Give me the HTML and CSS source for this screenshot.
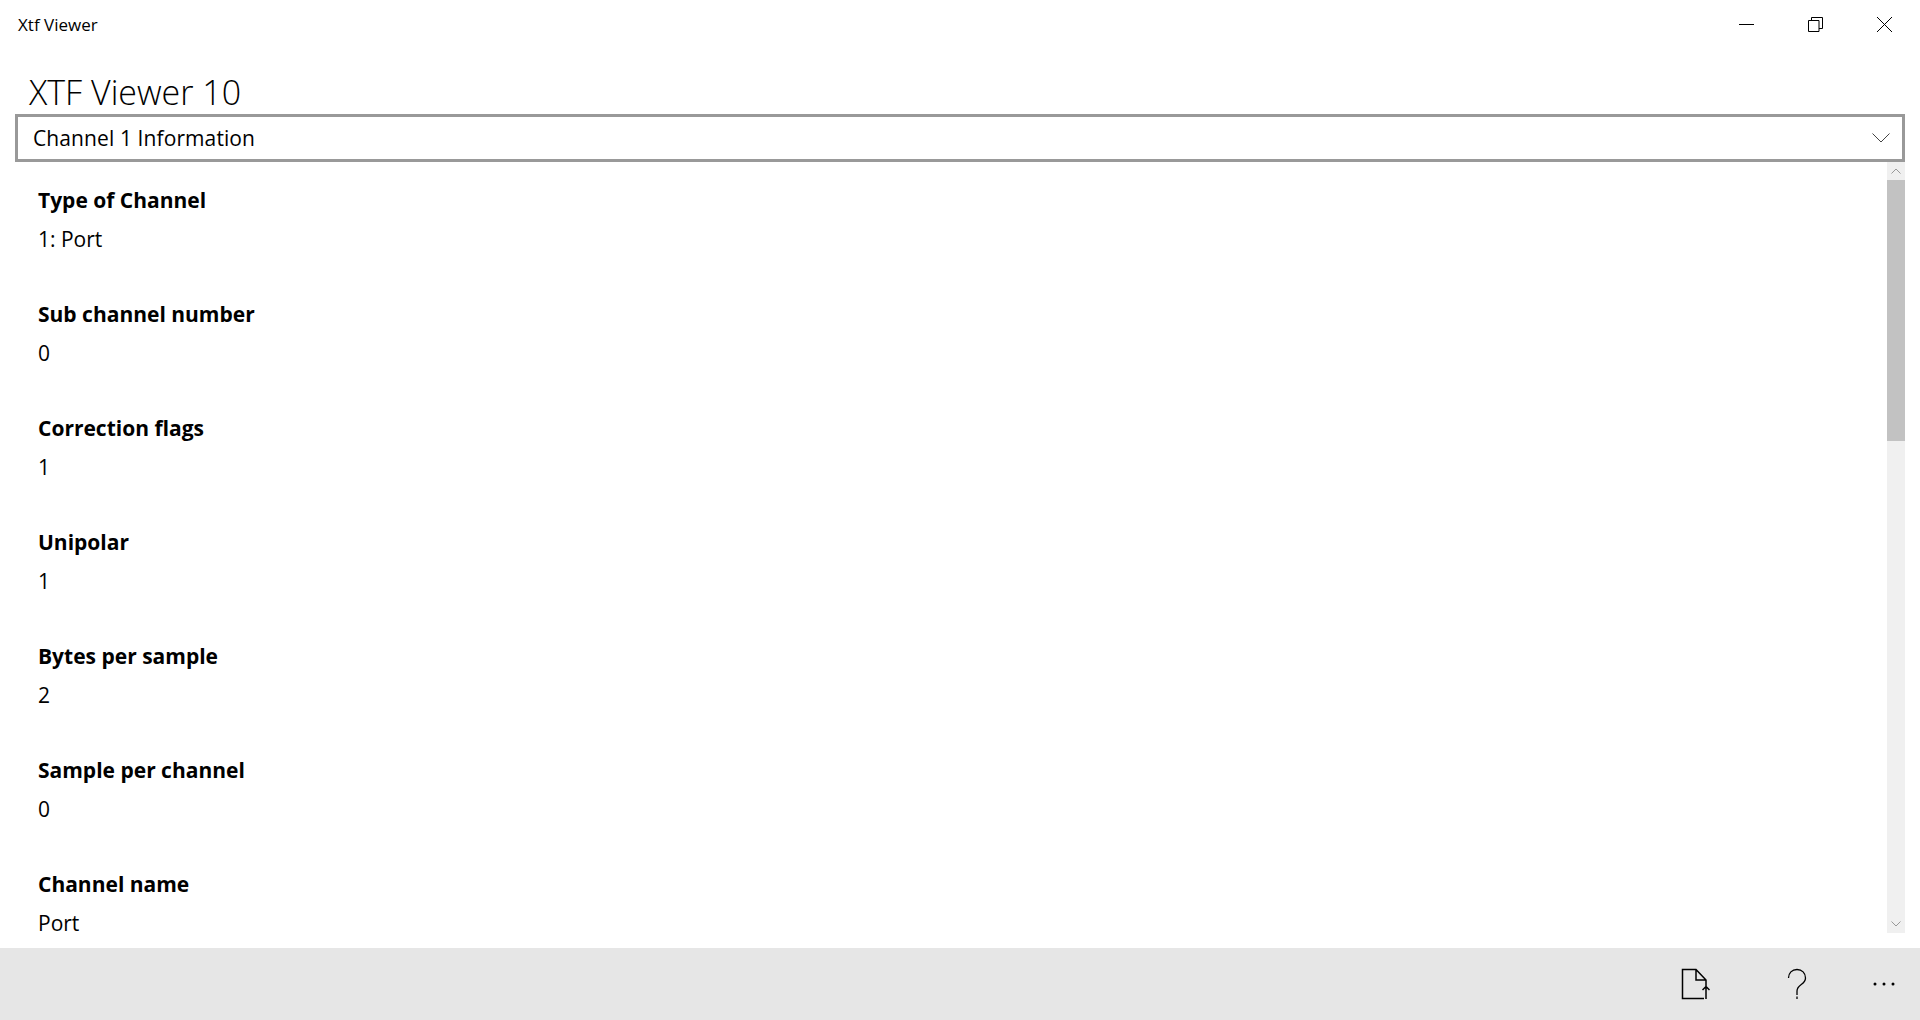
FILE: index.html
```html
<!DOCTYPE html>
<html lang="en">
<head>
  <meta charset="UTF-8" />
  <title>Xtf Viewer</title>
  <link rel="stylesheet" href="styles.css">
</head>
<body>
  <div class="app">
    <!-- Title bar -->
    <header class="titlebar">
      <span class="app-name">Xtf Viewer</span>
      <div class="win-buttons">
        <div class="win-btn"><svg width="15" height="15" viewBox="0 0 15 15"><path d="M0 7.500h15" /></svg></div>
        <div class="win-btn"><svg width="15" height="15" viewBox="0 0 15 15"><path d="M0.500 3.500h10.500v11h-10.500zM3.500 3.500v-3h11v11h-3.500" /></svg></div>
        <div class="win-btn"><svg width="15" height="15" viewBox="0 0 15 15"><path d="M0 0l15 15M15 0l-15 15" /></svg></div>
      </div>
    </header>

    <h1 class="page-title">XTF Viewer 10</h1>

    <div class="combo">
      <span>Channel 1 Information</span>
      <svg class="combo-arrow" width="18" height="10" viewBox="0 0 18 10"><path d="M0.500 0.500l8.500 8.500l8.500-8.500" /></svg>
    </div>

    <!-- Field list with scrollbar -->
    <div class="content">
      <div class="fields">
        <section class="field"><h2>Type of Channel</h2><p>1: Port</p></section>
        <section class="field"><h2>Sub channel number</h2><p>0</p></section>
        <section class="field"><h2>Correction flags</h2><p>1</p></section>
        <section class="field"><h2>Unipolar</h2><p>1</p></section>
        <section class="field"><h2>Bytes per sample</h2><p>2</p></section>
        <section class="field"><h2>Sample per channel</h2><p>0</p></section>
        <section class="field"><h2>Channel name</h2><p>Port</p></section>
      </div>
      <div class="scrollbar">
        <div class="scroll-btn">
          <svg width="10" height="6" viewBox="0 0 10 6"><path d="M0.500 5.500l4.500-4.500l4.500 4.500" /></svg>
        </div>
        <div class="scroll-track"><div class="scroll-thumb"></div></div>
        <div class="scroll-btn">
          <svg width="10" height="6" viewBox="0 0 10 6"><path d="M0.500 0.500l4.500 4.500l4.500-4.500" /></svg>
        </div>
      </div>
    </div>

    <!-- Command bar -->
    <footer class="commandbar">
      <button class="cmd">
        <svg class="cmd-heavy" width="30" height="32" viewBox="0 0 30 32"><path d="M24 30.500h-21.500v-29h13.500l10 10.500v6M16 1.500v10.500h10M26 31v-12.500M22.500 22l3.500-3.500l3.500 3.500" /></svg>
      </button>
      <button class="cmd">
        <svg class="cmd-help" width="20" height="32" viewBox="0 0 20 32"><path d="M1.500 10c0-5 3.500-8.500 8.500-8.500s8.500 3.500 8.500 8.500c0 7-8.500 6-8.500 13v4M10 28.500v2.500" /></svg>
      </button>
      <button class="cmd cmd-more">
        <svg class="cmd-dots" width="22" height="4" viewBox="0 0 22 4"><circle cx="2" cy="2" r="1.500" /><circle cx="11" cy="2" r="1.500" /><circle cx="20" cy="2" r="1.500" /></svg>
      </button>
    </footer>
  </div>
</body>
</html>
```

FILE: styles.css
```css
/* RESET & BASE */
* {
  margin: 0;
  padding: 0;
  box-sizing: border-box;
}
body {
  font-family: "Open Sans", "Noto Sans", sans-serif;
  background: #fff;
  color: #000;
  overflow: hidden;
}
svg {
  display: block;
  fill: none;
  stroke: #000;
  stroke-width: 1;
}
.app {
  display: flex;
  flex-direction: column;
  height: 1020px;
}
/* TITLE BAR */
.titlebar {
  display: flex;
  align-items: center;
  justify-content: space-between;
  height: 48px;
  padding: 0 1px 0 18px;
  flex: none;
}
.app-name {
  font-size: 17px;
}
.win-buttons {
  display: flex;
}
.win-btn {
  display: flex;
  align-items: center;
  justify-content: center;
  width: 69px;
  height: 48px;
}
/* HEADER AND COMBO */
.page-title {
  font-size: 34px;
  font-weight: 300;
  line-height: 44px;
  height: 66px;
  padding: 22px 0 0 29px;
  flex: none;
}
.combo {
  display: flex;
  align-items: center;
  justify-content: space-between;
  height: 48px;
  margin: 0 15px;
  padding: 0 12px 0 15px;
  border: 3px solid #999;
  font-size: 21px;
  letter-spacing: 0.1px;
  flex: none;
}
.combo-arrow {
  stroke: #444;
}
/* FIELD LIST */
.content {
  display: flex;
  flex: 1;
  min-height: 0;
  overflow: hidden;
}
.fields {
  flex: 1;
  padding: 19px 0 0 38px;
  overflow: hidden;
}
.field {
  height: 114px;
  font-size: 21px;
  line-height: 39px;
}
.field h2 {
  font-size: 21px;
  font-weight: 700;
  line-height: 39px;
}
/* SCROLLBAR */
.scrollbar {
  display: flex;
  flex-direction: column;
  width: 18px;
  margin: 0 15px 15px 0;
  background: #f0f0f0;
}
.scroll-btn {
  display: flex;
  align-items: center;
  justify-content: center;
  height: 18px;
  flex: none;
}
.scroll-btn svg {
  stroke: #999;
}
.scroll-track {
  flex: 1;
}
.scroll-thumb {
  height: 261px;
  background: #c2c2c2;
}
/* COMMAND BAR */
.commandbar {
  display: flex;
  justify-content: flex-end;
  align-items: center;
  height: 72px;
  background: #e6e6e6;
  flex: none;
}
.cmd {
  display: flex;
  align-items: center;
  justify-content: center;
  width: 102px;
  height: 72px;
  background: none;
  border: none;
}
.cmd-more {
  width: 72px;
}
.cmd-heavy {
  stroke-width: 1.500;
}
.cmd-help {
  stroke-width: 1.300;
}
.cmd-dots {
  fill: #000;
  stroke: none;
}
```
